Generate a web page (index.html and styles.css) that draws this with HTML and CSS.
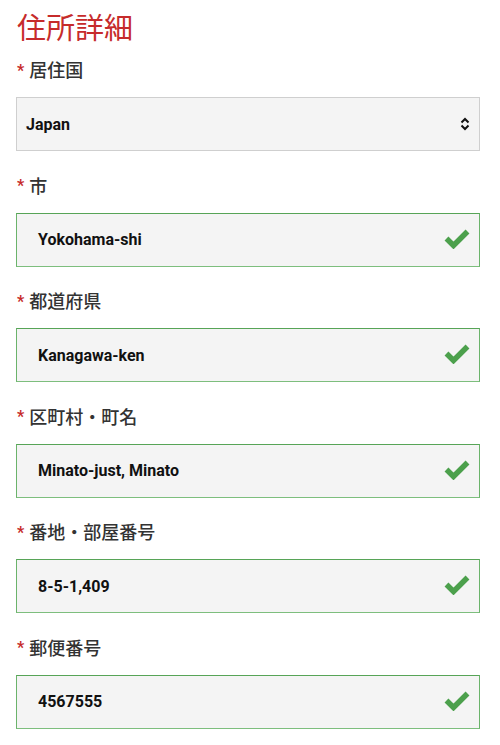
FILE: index.html
```html
<!DOCTYPE html>
<html lang="ja">
<head>
<meta charset="utf-8">
<title>住所詳細</title>
<link rel="stylesheet" href="styles.css">
</head>
<body>
<main class="form">
  <h1 class="title">住所詳細</h1>

  <div class="field">
    <label class="label"><span class="req">*</span>居住国</label>
    <div class="box select">
      <span class="value">Japan</span>
      <svg class="arrows" width="10" height="14" viewBox="0 0 10 14"><polyline points="1.5,5.5 5,2 8.5,5.5" fill="none" stroke="#111" stroke-width="2"/><polyline points="1.5,8.5 5,12 8.5,8.5" fill="none" stroke="#111" stroke-width="2"/></svg>
    </div>
  </div>

  <div class="field">
    <label class="label"><span class="req">*</span>市</label>
    <div class="box valid">
      <span class="value">Yokohama-shi</span>
      <svg class="check" width="26" height="20" viewBox="0 0 26 20"><polyline points="2.5,9.5 9.5,16.5 23.5,2.5" fill="none" stroke="#4ca04c" stroke-width="5.5"/></svg>
    </div>
  </div>

  <div class="field">
    <label class="label"><span class="req">*</span>都道府県</label>
    <div class="box valid">
      <span class="value">Kanagawa-ken</span>
      <svg class="check" width="26" height="20" viewBox="0 0 26 20"><polyline points="2.5,9.5 9.5,16.5 23.5,2.5" fill="none" stroke="#4ca04c" stroke-width="5.5"/></svg>
    </div>
  </div>

  <div class="field">
    <label class="label"><span class="req">*</span>区町村・町名</label>
    <div class="box valid">
      <span class="value">Minato-just, Minato</span>
      <svg class="check" width="26" height="20" viewBox="0 0 26 20"><polyline points="2.5,9.5 9.5,16.5 23.5,2.5" fill="none" stroke="#4ca04c" stroke-width="5.5"/></svg>
    </div>
  </div>

  <div class="field">
    <label class="label"><span class="req">*</span>番地・部屋番号</label>
    <div class="box valid">
      <span class="value">8-5-1,409</span>
      <svg class="check" width="26" height="20" viewBox="0 0 26 20"><polyline points="2.5,9.5 9.5,16.5 23.5,2.5" fill="none" stroke="#4ca04c" stroke-width="5.5"/></svg>
    </div>
  </div>

  <div class="field">
    <label class="label"><span class="req">*</span>郵便番号</label>
    <div class="box valid">
      <span class="value">4567555</span>
      <svg class="check" width="26" height="20" viewBox="0 0 26 20"><polyline points="2.5,9.5 9.5,16.5 23.5,2.5" fill="none" stroke="#4ca04c" stroke-width="5.5"/></svg>
    </div>
  </div>
</main>
</body>
</html>
```

FILE: styles.css
```css
html, body {
  margin: 0;
  padding: 0;
  background: #fff;
}

.form {
  padding: 8px 20px 0 16px;
  font-family: Roboto, "Noto Sans CJK JP", sans-serif;
}

.title {
  margin: 0 0 13px 1px;
  font-family: "Noto Sans CJK JP", sans-serif;
  font-weight: 400;
  font-size: 29px;
  line-height: 36px;
  color: #c62b2b;
}

.field {
  margin-bottom: 21.6px;
}

.label {
  display: flex;
  align-items: center;
  height: 24px;
  margin: 0 0 16px 1px;
  font-family: "Noto Sans CJK JP", sans-serif;
  font-weight: 500;
  font-size: 18px;
  color: #333;
}

.req {
  color: #c62b2b;
  font-family: Roboto, sans-serif;
  font-weight: 700;
  font-size: 16px;
  margin-right: 5px;
  position: relative;
  top: 1px;
}

.box {
  box-sizing: border-box;
  height: 54px;
  display: flex;
  align-items: center;
  justify-content: space-between;
  background: #f4f4f4;
  border: 1px solid #cfcfcf;
}

.select {
  padding: 0 9px 0 9px;
}

.valid {
  padding: 0 9px 0 21px;
  border-color: #57a457;
  border-bottom-color: #7dbe7d;
  border-right-color: #6bb36b;
  border-left-color: #6bb36b;
}

.value {
  font-family: Roboto, sans-serif;
  font-weight: 700;
  font-size: 16px;
  color: #111;
}

.check {
  display: block;
  margin-top: -2px;
}
```
